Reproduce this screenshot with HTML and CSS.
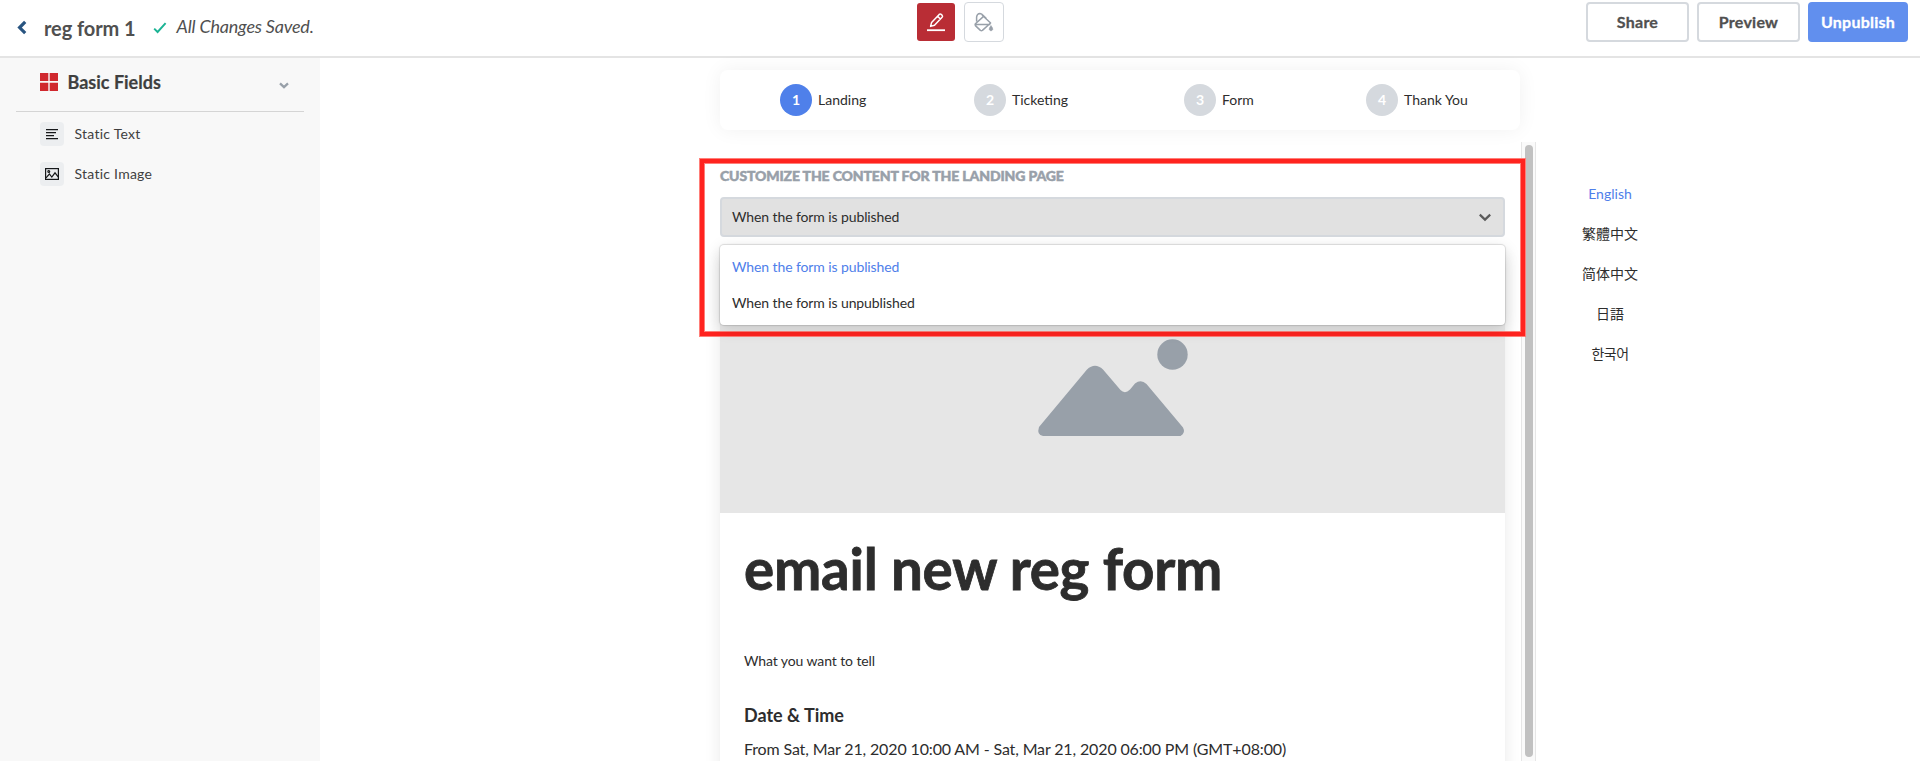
FILE: index.html
```html
<!DOCTYPE html>
<html lang="en">
<head>
<meta charset="utf-8">
<title>reg form 1</title>
<link rel="stylesheet" href="styles.css">
</head>
<body>
<header class="topbar">
  <div class="topbar-left">
    <svg class="back" width="10" height="16" viewBox="0 0 10 16"><path d="M8.2 1.8 2.6 7.6l5.6 5.6" fill="none" stroke="#285480" stroke-width="3.2"/></svg>
    <h1 class="form-name">reg form 1</h1>
    <svg class="check" width="14" height="12" viewBox="0 0 14 12"><path d="M1.2 6.6 4.6 10 12.6 1.2" fill="none" stroke="#1bb394" stroke-width="1.9"/></svg>
    <span class="saved">All Changes Saved.</span>
  </div>
  <div class="modes">
    <button class="mode mode-active">
      <svg width="20" height="20" viewBox="0 0 20 20" fill="none" stroke="#fff" stroke-width="1.5"><path d="M1 18.2h18" stroke-width="1.8"/><path d="M4.6 14.4l1-4 7.6-8q1-.9 2 0l.9.9q.9 1 0 2l-7.600 8zM11.600 4.2l2.800 2.800" stroke-linejoin="round"/></svg>
    </button>
    <button class="mode">
      <svg width="22" height="20" viewBox="0 0 22 20" fill="none" stroke="#98a0a9" stroke-width="1.5"><path d="M9 3 17.6 11 9.4 18.4Q8.4 19 7.4 18.4L2.4 13.6Q1.8 12.6 2.4 11.8L10.6 4.4M2.2 12.4H17.4M3.6 9.4V5.2Q4 1.6 7 1.4 9 1.5 10 3.4L13.6 6.9" stroke-linejoin="round"/><path d="M18 13.6q2.2 2.8 1.7 4-.6 1.2-1.7 1.2t-1.7-1.2q-.5-1.2 1.7-4z" fill="#98a0a9" stroke-width=".6"/></svg>
    </button>
  </div>
  <div class="actions">
    <button class="btn">Share</button>
    <button class="btn">Preview</button>
    <button class="btn btn-primary">Unpublish</button>
  </div>
</header>
<div class="body">
  <aside class="sidebar">
    <div class="group">
      <svg width="18" height="18" viewBox="0 0 18 18" fill="#d0282e"><path d="M0 0h8.3v8H0zM9.7 0H18v8H9.7zM0 9.7h8.3V18H0zM9.7 9.7H18V18H9.7z"/></svg>
      <span class="group-title">Basic Fields</span>
      <svg class="group-arrow" width="10" height="8" viewBox="0 0 10 8"><path d="M1 1.4 5 5.2 9 1.4" fill="none" stroke="#98a0a9" stroke-width="2.3"/></svg>
    </div>
    <ul class="fields">
      <li class="field"><span class="field-icon"><svg width="14" height="12" viewBox="0 0 14 12" fill="#16181a"><path d="M1 1h12v1.2H1zM1 4h10v1.2H1zM1 7h8v1.2H1zM1 10h12v1.2H1z"/></svg></span>Static Text</li>
      <li class="field"><span class="field-icon"><svg width="14" height="12" viewBox="0 0 14 12" fill="none" stroke="#16181a" stroke-width="1.2"><rect x=".6" y=".6" width="12.8" height="10.8"/><path d="M1 9.8 4.4 6l2.4 3L10 4.8l3.2 4" /><circle cx="3.8" cy="3.4" r=".9"/></svg></span>Static Image</li>
    </ul>
  </aside>
  <main class="main">
    <ol class="steps">
      <li class="step"><span class="num num-active">1</span>Landing</li>
      <li class="step"><span class="num">2</span>Ticketing</li>
      <li class="step"><span class="num">3</span>Form</li>
      <li class="step"><span class="num">4</span>Thank You</li>
    </ol>
    <div class="scroll">
      <div class="content">
        <h2 class="caption">CUSTOMIZE THE CONTENT FOR THE LANDING PAGE</h2>
        <div class="select">When the form is published
          <svg width="14" height="9" viewBox="0 0 14 9"><path d="M1.8 1.6 7 6.6l5.2-5" fill="none" stroke="#5a5a5a" stroke-width="2.2"/></svg>
          <div class="menu">
            <div class="option option-on">When the form is published</div>
            <div class="option">When the form is unpublished</div>
          </div>
        </div>
        <article class="card">
          <div class="hero">
            <svg width="154" height="98" viewBox="0 0 154 98" fill="#98a0a9"><circle cx="137.500" cy="15.500" r="15.200"/><path d="M4 88 52 30.500Q60 23 68 30.500L85.500 51Q90 55.500 95 50.500L100 44.500Q106 40 111.500 45L148 88.500Q151 94 145.500 97H8Q1.500 96 4 88z"/></svg>
          </div>
          <div class="card-text">
            <h3 class="title">email new reg form</h3>
            <p class="intro">What you want to tell</p>
            <h4 class="when">Date &amp; Time</h4>
            <p class="date">From Sat, Mar 21, 2020 10:00 AM - Sat, Mar 21, 2020 06:00 PM (GMT+08:00)</p>
          </div>
        </article>
      </div>
      <div class="track"><div class="thumb"></div></div>
    </div>
  </main>
  <nav class="langs">
    <a class="lang lang-on">English</a>
    <a class="lang" lang="zh-Hant">繁體中文</a>
    <a class="lang" lang="zh-Hans">简体中文</a>
    <a class="lang" lang="ja">日語</a>
    <a class="lang lang-ko" lang="ko">한국어</a>
  </nav>
</div>
<div class="highlight"></div>
</body>
</html>
```

FILE: styles.css
```css
* { box-sizing: border-box; margin: 0; padding: 0; }
body { width: 1920px; height: 761px; overflow: hidden; display: flex; flex-direction: column; position: relative; background: #fff; color: #2d2d2d; font: 14px/20px Lato, "Noto Sans CJK SC", sans-serif; }
button { font-family: inherit; }
svg { display: block; flex: none; }
ul, ol { list-style: none; }

.topbar { height: 58px; flex: none; display: grid; grid-template-columns: 917px 1fr auto; align-items: start; border-bottom: 2px solid #e4e4e4; padding-right: 12px; }
.topbar-left { display: flex; align-items: center; height: 56px; padding-left: 17px; color: #505050; }
.form-name { margin-left: 17px; font-size: 20px; line-height: 24px; font-weight: 700; letter-spacing: -.08px; }
.check { margin-left: 17px; }
.saved { margin: -4px 0 0 10px; font-size: 18px; font-style: italic; line-height: 24px; letter-spacing: -.2px; }
.modes { display: flex; gap: 9px; padding-top: 2px; }
.mode { width: 40px; height: 40px; display: flex; align-items: center; justify-content: center; border: 1px solid #d5d9de; border-radius: 4px; background: #fff; }
.mode-active { width: 38px; height: 38px; margin-top: 1px; border: 0; border-radius: 3px; background: #b92d35; }
.actions { display: flex; gap: 8px; padding-top: 2px; }
.btn { width: 103px; height: 40px; padding-bottom: 2px; border: 2px solid #d5d9de; border-radius: 4px; background: #fff; color: #505050; font-size: 16px; font-weight: 700; letter-spacing: .25px; -webkit-text-stroke: .3px; }
.btn-primary { width: 100px; border: 0; background: #618fee; color: #fff; }

.body { flex: 1; display: flex; min-height: 0; }
.sidebar { width: 320px; flex: none; padding: 0 16px; background: #f8f8f8; color: #3f3f3f; }
.group { display: flex; align-items: center; height: 54px; padding: 0 15px 5px 24px; border-bottom: 1px solid #d5d5d5; }
.group-title { flex: 1; margin-left: 9.5px; font-size: 18px; font-weight: 700; -webkit-text-stroke: .2px; }
.group-arrow { margin-top: 7px; }
.fields { display: flex; flex-direction: column; gap: 16px; padding: 10px 24px; }
.field { display: flex; align-items: center; height: 24px; gap: 10.5px; letter-spacing: .25px; }
.field-icon { width: 24px; height: 24px; display: flex; align-items: center; justify-content: center; border-radius: 4px; background: #eceef0; }

.main { width: 816px; margin-left: 400px; padding-top: 12px; display: flex; flex-direction: column; }
.steps { width: 800px; height: 60px; flex: none; display: grid; grid-template-columns: 194px 210px 182px 1fr; align-items: center; padding-left: 60px; border-radius: 8px; background: #fff; box-shadow: 0 0 20px rgba(0,0,0,.06); }
.step { display: flex; align-items: center; gap: 6px; }
.num { width: 32px; height: 32px; border-radius: 50%; background: #d5d9de; color: #fff; font-weight: 700; line-height: 32px; text-align: center; }
.num-active { background: #4f80ea; }
.scroll { flex: 1; display: flex; justify-content: space-between; min-height: 0; margin: 12px 0 0 -20px; overflow: hidden; }
.content { width: 805px; padding: 24px 0 0 20px; }
.caption { height: 31px; color: #98a0a9; font-size: 14px; font-weight: 900; line-height: 20px; letter-spacing: -.13px; -webkit-text-stroke: .5px #98a0a9; }
.select { position: relative; display: flex; align-items: center; justify-content: space-between; height: 40px; padding: 0 11px 0 10px; border: 2px solid #d5d9de; border-radius: 4px; background: #e1e1e1; letter-spacing: -.1px; }
.menu { position: absolute; z-index: 1; left: -2px; right: -2px; top: 46px; height: 80px; padding-top: 4px; border-radius: 4px; background: #fff; box-shadow: 0 0 1px 1px rgba(0,0,0,.12), 0 4px 16px rgba(0,0,0,.14); }
.option { height: 36px; padding-left: 10px; line-height: 36px; margin-left: 2px; }
.option-on { color: #4f80ea; }
.card { height: 560px; margin-top: 20px; box-shadow: 0 0 16px rgba(0,0,0,.09); }
.hero { height: 256px; padding: 82px 0 0 315px; background: #e6e6e6; }
.card-text { padding: 22px 24px; background: #fff; height: 304px; }
.title { font-size: 56.5px; line-height: 66px; font-weight: 700; letter-spacing: -.22px; -webkit-text-stroke: .8px; }
.intro { margin-top: 50px; letter-spacing: -.1px; }
.when { margin-top: 32px; font-size: 18px; line-height: 24px; }
.date { margin-top: 10px; font-size: 16px; line-height: 24px; white-space: nowrap; letter-spacing: -.14px; }
.track { width: 15px; padding: 3px 2px 4px 3px; border: solid #e6e6e6; border-width: 0 1px; background: #fafafa; }
.thumb { width: 8px; height: 100%; border-radius: 4px; background: #c1c1c1; }
.langs { width: 148px; display: flex; flex-direction: column; gap: 20px; padding-top: 126px; text-align: center; }
.lang { height: 20px; }
.lang-on { color: #4f80ea; }
.lang-ko { letter-spacing: -.6px; }
.highlight { position: absolute; left: 700px; top: 159px; width: 825px; height: 177px; border: 4px solid #ff231f; box-shadow: 0 0 0 1px #ff7f79, inset 0 0 0 1px #ff7f79; }
```
